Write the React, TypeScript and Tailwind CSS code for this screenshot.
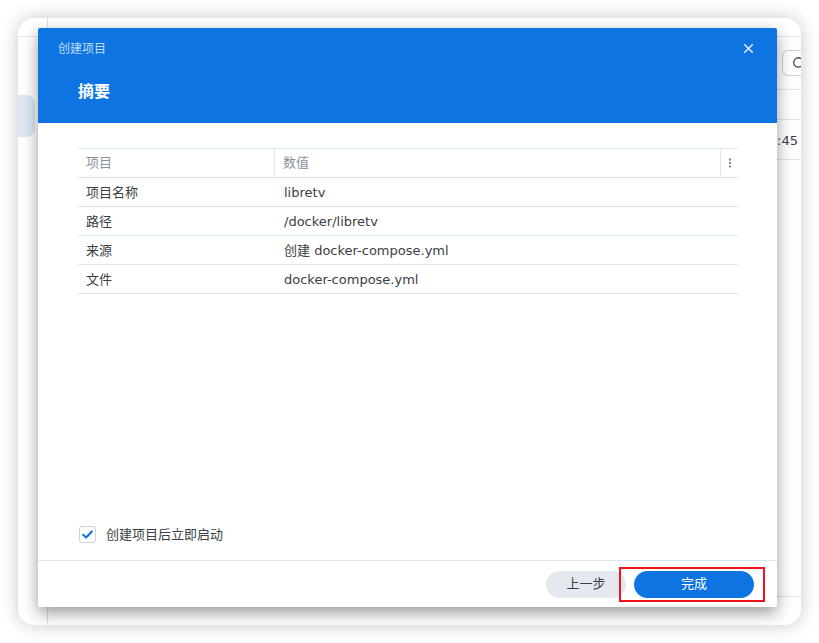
import React from 'react';
import { X, Search, EllipsisVertical } from 'lucide-react';

const font = { fontFamily: '"DejaVu Sans", "Noto Sans CJK SC", sans-serif' };

const rows = [
  { key: '项目名称', value: 'libretv' },
  { key: '路径', value: '/docker/libretv' },
  { key: '来源', value: '创建 docker-compose.yml' },
  { key: '文件', value: 'docker-compose.yml' },
];

function BackgroundApp() {
  return (
    <div className="flex h-full w-full">
      {/* sidebar */}
      <div className="w-[30px] shrink-0 border-r border-[#d9dfe6] flex flex-col">
        <div className="h-[19px] shrink-0 border-b border-[#e3e7ec]" />
        <div className="pt-[58px] pr-[12px]">
          <div className="h-[42px] -ml-2 rounded-lg bg-[#dde8f4]" />
        </div>
      </div>

      {/* main */}
      <div className="flex-1 flex flex-col min-w-0">
        <div className="h-[19px] shrink-0 border-b border-[#e3e7ec]" />
        <div className="h-[53px] shrink-0 border-b border-[#dfe5ec] flex items-center justify-end">
          <div className="w-[19px] h-[26px] overflow-hidden rounded-l-md border-y border-l border-[#c9d1db] flex items-center pl-[9px]">
            <Search className="w-[14px] h-[14px] shrink-0 text-[#3a3f46]" strokeWidth={2.2} />
          </div>
        </div>
        <div className="h-[30px] shrink-0 border-b border-[#dfe5ec]" />
        <div className="h-[40px] shrink-0 border-b border-[#dfe5ec] flex items-center justify-end pr-[3px] pt-[3px] overflow-hidden">
          <span className="text-[13px] text-[#3c3f44] whitespace-nowrap">10:45</span>
        </div>
        <div className="flex-1" />
        <div className="h-[29px] shrink-0 border-t border-[#dfe5ec]" />
      </div>
    </div>
  );
}

function CheckIcon() {
  return (
    <svg viewBox="0 0 17 17" className="w-[17px] h-[17px]">
      <path d="M3.6 8.8 L7 12 L13.4 5" fill="none" stroke="#0d74e1" strokeWidth="2.4" strokeLinecap="round" strokeLinejoin="round" />
    </svg>
  );
}

export default function App() {
  return (
    <div className="w-[819px] h-[643px] bg-white p-[18px]" style={font}>
      <div className="relative w-[783px] h-[607px] rounded-[16px] bg-white overflow-hidden shadow-[0_0_18px_rgba(0,0,0,0.22)]">
        <BackgroundApp />

        {/* dialog */}
        <div className="absolute left-[20px] top-[10px] w-[739px] h-[579px] bg-white flex flex-col rounded-[2px] shadow-[0_6px_16px_rgba(0,0,0,0.4)]">
          <div className="h-[95px] shrink-0 bg-[#0d74e1] flex flex-col rounded-t-[2px]">
            <div className="h-[40px] flex items-center justify-between pl-[20px] pr-[21px] pt-[1px]">
              <span className="text-[12px] text-white/75">创建项目</span>
              <X className="w-[15px] h-[15px] text-white/80" strokeWidth={2.8} />
            </div>
            <div className="pl-[40px] pt-[12px]">
              <span className="text-[16px] font-bold text-white">摘要</span>
            </div>
          </div>

          <div className="flex-1 flex flex-col px-[40px] pr-[39px] pt-[25px] pb-[16px] min-h-0">
            <div className="text-[13px] text-[#3b3e43]">
              <div className="grid grid-cols-[197px_1fr_17px] h-[30px] border-y border-[#dbe3ec] text-[#8a9098]">
                <div className="flex items-center pl-[8px] border-r border-[#e3e8ee]">项目</div>
                <div className="flex items-center pl-[8px] border-r border-[#e3e8ee]">数值</div>
                <div className="flex items-center justify-center">
                  <EllipsisVertical className="w-[12px] h-[12px] text-[#7d8590]" strokeWidth={2.6} />
                </div>
              </div>
              {rows.map(r => (
                <div key={r.key} className="grid grid-cols-[197px_1fr_17px] h-[29px] border-b border-[#dbe3ec]">
                  <div className="flex items-center pl-[8px] pt-[1px]">{r.key}</div>
                  <div className="flex items-center pl-[9px] pt-[1px] whitespace-nowrap">{r.value}</div>
                  <div />
                </div>
              ))}
            </div>

            <div className="flex-1" />

            <div className="flex items-center gap-[10px] pl-[1px]">
              <span className="w-[17px] h-[17px] rounded-[3px] border border-[#c8d4e2] bg-white flex items-center justify-center">
                <CheckIcon />
              </span>
              <span className="text-[13px] text-[#3b3e43]">创建项目后立即启动</span>
            </div>
          </div>

          <div className="h-[47px] shrink-0 border-t border-[#dbe3ec] flex items-center justify-end gap-[8px] pr-[23px]">
            <button className="w-[80px] h-[27px] rounded-full bg-[#e4e9f0] text-[13px] text-[#3b3e43]">上一步</button>
            <div className="relative">
              <button className="w-[120px] h-[27px] rounded-full bg-[#0d74e1] text-[13px] text-white">完成</button>
              <div className="absolute left-[-15px] top-[-4px] w-[146px] h-[35px] border-2 border-[#f2141c] pointer-events-none" />
            </div>
          </div>
        </div>
      </div>
    </div>
  );
}
